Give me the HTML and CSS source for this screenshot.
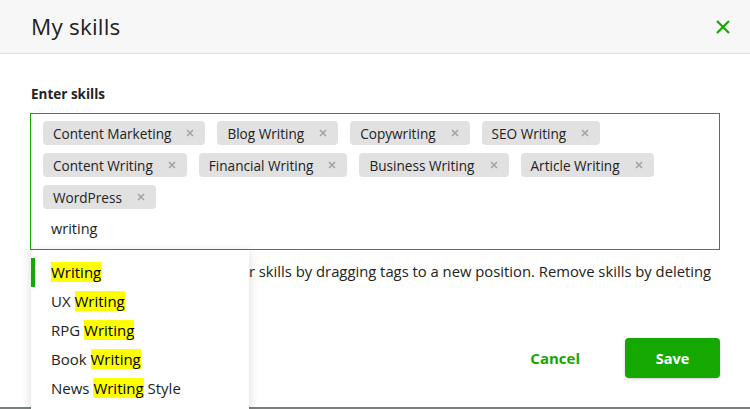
FILE: index.html
```
<!DOCTYPE html>
<html lang="en">
<head>
<meta charset="utf-8">
<title>My skills</title>
<link rel="stylesheet" href="styles.css">
</head>
<body>
<div class="dialog">
  <header class="dlg-head">
    <h1 class="dlg-title">My skills</h1>
    <button class="close" aria-label="Close">
      <svg width="14" height="14" viewBox="0 0 14 14"><path d="M1 1L13 13M13 1L1 13" stroke="#14a800" stroke-width="2.2" fill="none"/></svg>
    </button>
  </header>
  <main class="dlg-body">
    <label class="field-label">Enter skills</label>
    <div class="tagbox">
      <div class="tags">
        <span class="tag">Content Marketing<i class="tx"><svg width="8" height="8" viewBox="0 0 8 8"><path d="M1 1L7 7M7 1L1 7"/></svg></i></span>
        <span class="tag">Blog Writing<i class="tx"><svg width="8" height="8" viewBox="0 0 8 8"><path d="M1 1L7 7M7 1L1 7"/></svg></i></span>
        <span class="tag">Copywriting<i class="tx"><svg width="8" height="8" viewBox="0 0 8 8"><path d="M1 1L7 7M7 1L1 7"/></svg></i></span>
        <span class="tag">SEO Writing<i class="tx"><svg width="8" height="8" viewBox="0 0 8 8"><path d="M1 1L7 7M7 1L1 7"/></svg></i></span>
        <span class="tag">Content Writing<i class="tx"><svg width="8" height="8" viewBox="0 0 8 8"><path d="M1 1L7 7M7 1L1 7"/></svg></i></span>
        <span class="tag">Financial Writing<i class="tx"><svg width="8" height="8" viewBox="0 0 8 8"><path d="M1 1L7 7M7 1L1 7"/></svg></i></span>
        <span class="tag">Business Writing<i class="tx"><svg width="8" height="8" viewBox="0 0 8 8"><path d="M1 1L7 7M7 1L1 7"/></svg></i></span>
        <span class="tag">Article Writing<i class="tx"><svg width="8" height="8" viewBox="0 0 8 8"><path d="M1 1L7 7M7 1L1 7"/></svg></i></span>
        <span class="tag">WordPress<i class="tx"><svg width="8" height="8" viewBox="0 0 8 8"><path d="M1 1L7 7M7 1L1 7"/></svg></i></span>
      </div>
      <div class="typed">writing</div>
    </div>
    <p class="helper">Add up to 15 skills. Reorder your skills by dragging tags to a new position. Remove skills by deleting them.</p>
    <div class="actions">
      <button class="btn-cancel">Cancel</button>
      <button class="btn-save">Save</button>
    </div>
  </main>
  <ul class="dropdown">
    <li class="opt active"><mark>Writing</mark></li>
    <li class="opt">UX <mark>Writing</mark></li>
    <li class="opt">RPG <mark>Writing</mark></li>
    <li class="opt">Book <mark>Writing</mark></li>
    <li class="opt">News <mark>Writing</mark> Style</li>
  </ul>
</div>
</body>
</html>
```

FILE: styles.css
```
* { box-sizing: border-box; }
html, body { margin: 0; padding: 0; }
body {
  width: 750px;
  height: 409px;
  overflow: hidden;
  background: #7b7f80;
  font-family: "Open Sans", "Liberation Sans", sans-serif;
  color: #222;
}
.dialog {
  position: relative;
  width: 750px;
  height: 407px;
  background: #fff;
}
.dlg-head {
  height: 54px;
  background: #f7f7f7;
  border-bottom: 1px solid #e0e0e0;
  display: flex;
  align-items: center;
  justify-content: space-between;
  padding: 0 20px 0 31px;
}
.dlg-title {
  margin: 0;
  font-size: 22.5px;
  font-weight: 400;
  color: #222;
  letter-spacing: 0.2px;
}
.close {
  border: 0;
  background: none;
  padding: 0;
  width: 14px;
  height: 14px;
  display: flex;
}
.dlg-body {
  padding: 30px 30px 0 30px;
}
.field-label {
  display: block;
  font-size: 13.5px;
  font-weight: 700;
  line-height: 20px;
  margin-left: 1px;
}
.tagbox {
  margin-top: 9px;
  border: 1px solid #14a800;
  padding: 7px 12px 8px 12px;
}
.tags {
  display: flex;
  flex-wrap: wrap;
  gap: 8px 12px;
}
.tag {
  display: inline-flex;
  align-items: center;
  height: 24px;
  padding: 0 11px 0 10px;
  background: #e1e1e1;
  border-radius: 4px;
  font-size: 13.6px;
  color: #222;
}
.tx {
  display: flex;
  margin-left: 15px;
}
.tx svg path {
  stroke: #a3a3a3;
  stroke-width: 1.6;
  fill: none;
}
.typed {
  margin-top: 8px;
  height: 24px;
  line-height: 24px;
  padding-left: 8px;
  font-size: 14.5px;
}
.helper {
  margin: 11px 0 0 1px;
  font-size: 14.8px;
  line-height: 20px;
}
.actions {
  display: flex;
  justify-content: flex-end;
  align-items: center;
  margin-top: 37px;
}
.btn-cancel {
  border: 0;
  background: none;
  font-family: inherit;
  font-size: 15px;
  font-weight: 700;
  color: #14a800;
  padding: 0;
  margin-right: 45px;
}
.btn-save {
  width: 95px;
  height: 40px;
  border: 0;
  border-radius: 4px;
  background: #14a800;
  color: #fff;
  font-family: inherit;
  font-size: 14.5px;
  font-weight: 700;
  box-shadow: 0 1px 3px rgba(0,0,0,0.2);
}
.dropdown {
  position: absolute;
  left: 31px;
  top: 250px;
  width: 218px;
  height: 170px;
  margin: 0;
  padding: 8px 0 0 0;
  list-style: none;
  background: #fff;
  box-shadow: 0 2px 10px rgba(0,0,0,0.15);
}
.opt {
  height: 29px;
  line-height: 29px;
  padding-left: 20px;
  font-size: 15px;
  color: #222;
}
.opt.active {
  border-left: 4px solid #14a800;
  padding-left: 16px;
}
mark {
  background: #ffff00;
  color: #000;
}
```
